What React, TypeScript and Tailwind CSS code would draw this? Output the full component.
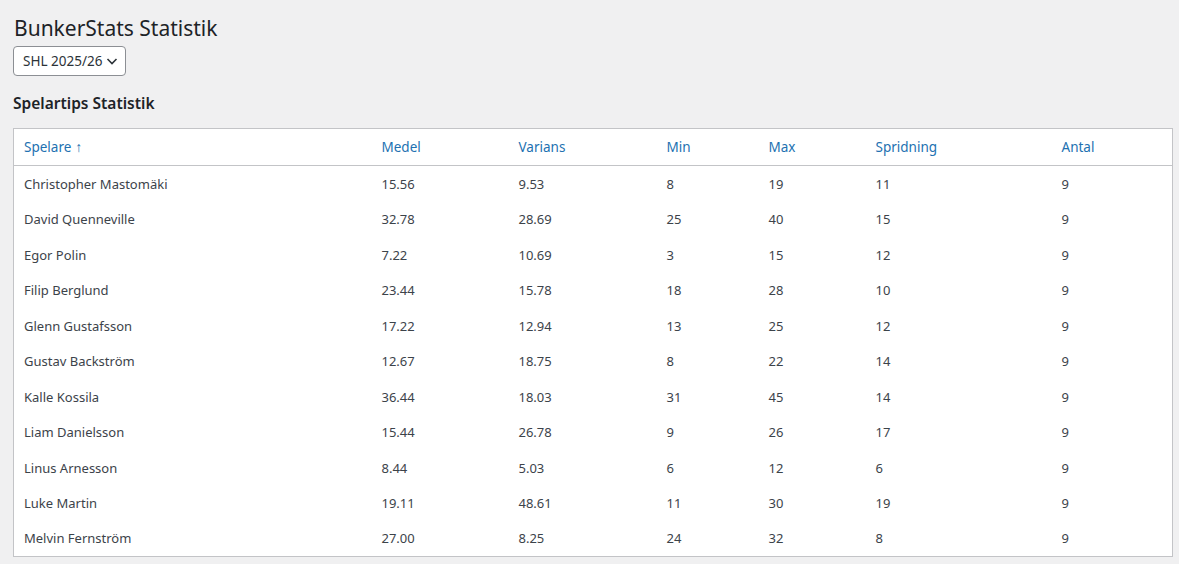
const rows: string[][] = [
  ["Christopher Mastomäki","15.56","9.53","8","19","11","9"],
  ["David Quenneville","32.78","28.69","25","40","15","9"],
  ["Egor Polin","7.22","10.69","3","15","12","9"],
  ["Filip Berglund","23.44","15.78","18","28","10","9"],
  ["Glenn Gustafsson","17.22","12.94","13","25","12","9"],
  ["Gustav Backström","12.67","18.75","8","22","14","9"],
  ["Kalle Kossila","36.44","18.03","31","45","14","9"],
  ["Liam Danielsson","15.44","26.78","9","26","17","9"],
  ["Linus Arnesson","8.44","5.03","6","12","6","9"],
  ["Luke Martin","19.11","48.61","11","30","19","9"],
  ["Melvin Fernström","27.00","8.25","24","32","8","9"],
];
const heads = ["Spelare","Medel","Varians","Min","Max","Spridning","Antal"];
const widths = [358,137,148,102,107,186,121];

export default function App() {
  return (
    <div className="h-[564px] overflow-hidden bg-[#f0f0f1] text-[#3c434a]" style={{ fontFamily: '"Noto Sans", "Open Sans", sans-serif' }}>
      <div className="pl-[13px] pr-[7px] pt-[14px]">
        <h1 className="text-[21px] leading-[29px] text-[#1d2327] ml-[1px]">BunkerStats Statistik</h1>
        <div className="mt-[3px] w-[113px] h-[30px] border border-[#8c8f94] rounded-[4px] bg-white flex items-center justify-between pl-[9px] pr-[6px] text-[13.5px] text-[#2c3338]">
          <span>SHL 2025/26</span>
          <svg width="14" height="14" viewBox="0 0 14 14"><path d="M2.5 5l4.5 4.5 4.5-4.5" fill="none" stroke="#2c3338" strokeWidth="1.6"/></svg>
        </div>
        <h2 className="mt-[16px] text-[15.5px] font-semibold text-[#1d2327] leading-[22px]">Spelartips Statistik</h2>
        <table className="mt-[14px] w-[1159px] border border-[#c3c4c7] bg-white border-collapse table-fixed text-[13px]">
          <colgroup>{widths.map((w, i) => <col key={i} style={{ width: w }} />)}</colgroup>
          <thead>
            <tr className="h-[37px] border-b border-[#c3c4c7]">
              {heads.map((h, i) => (
                <th key={h} className="text-left font-normal text-[13.5px] text-[#2271b1] px-[10px]">
                  {h}{i === 0 && <span className="ml-[4px] text-[14px]">↑</span>}
                </th>
              ))}
            </tr>
          </thead>
          <tbody>
            {rows.map((r) => (
              <tr key={r[0]} className="h-[35.5px]">
                {r.map((c, i) => <td key={i} className="px-[10px] pt-[2px]">{c}</td>)}
              </tr>
            ))}
          </tbody>
        </table>
      </div>
    </div>
  );
}
